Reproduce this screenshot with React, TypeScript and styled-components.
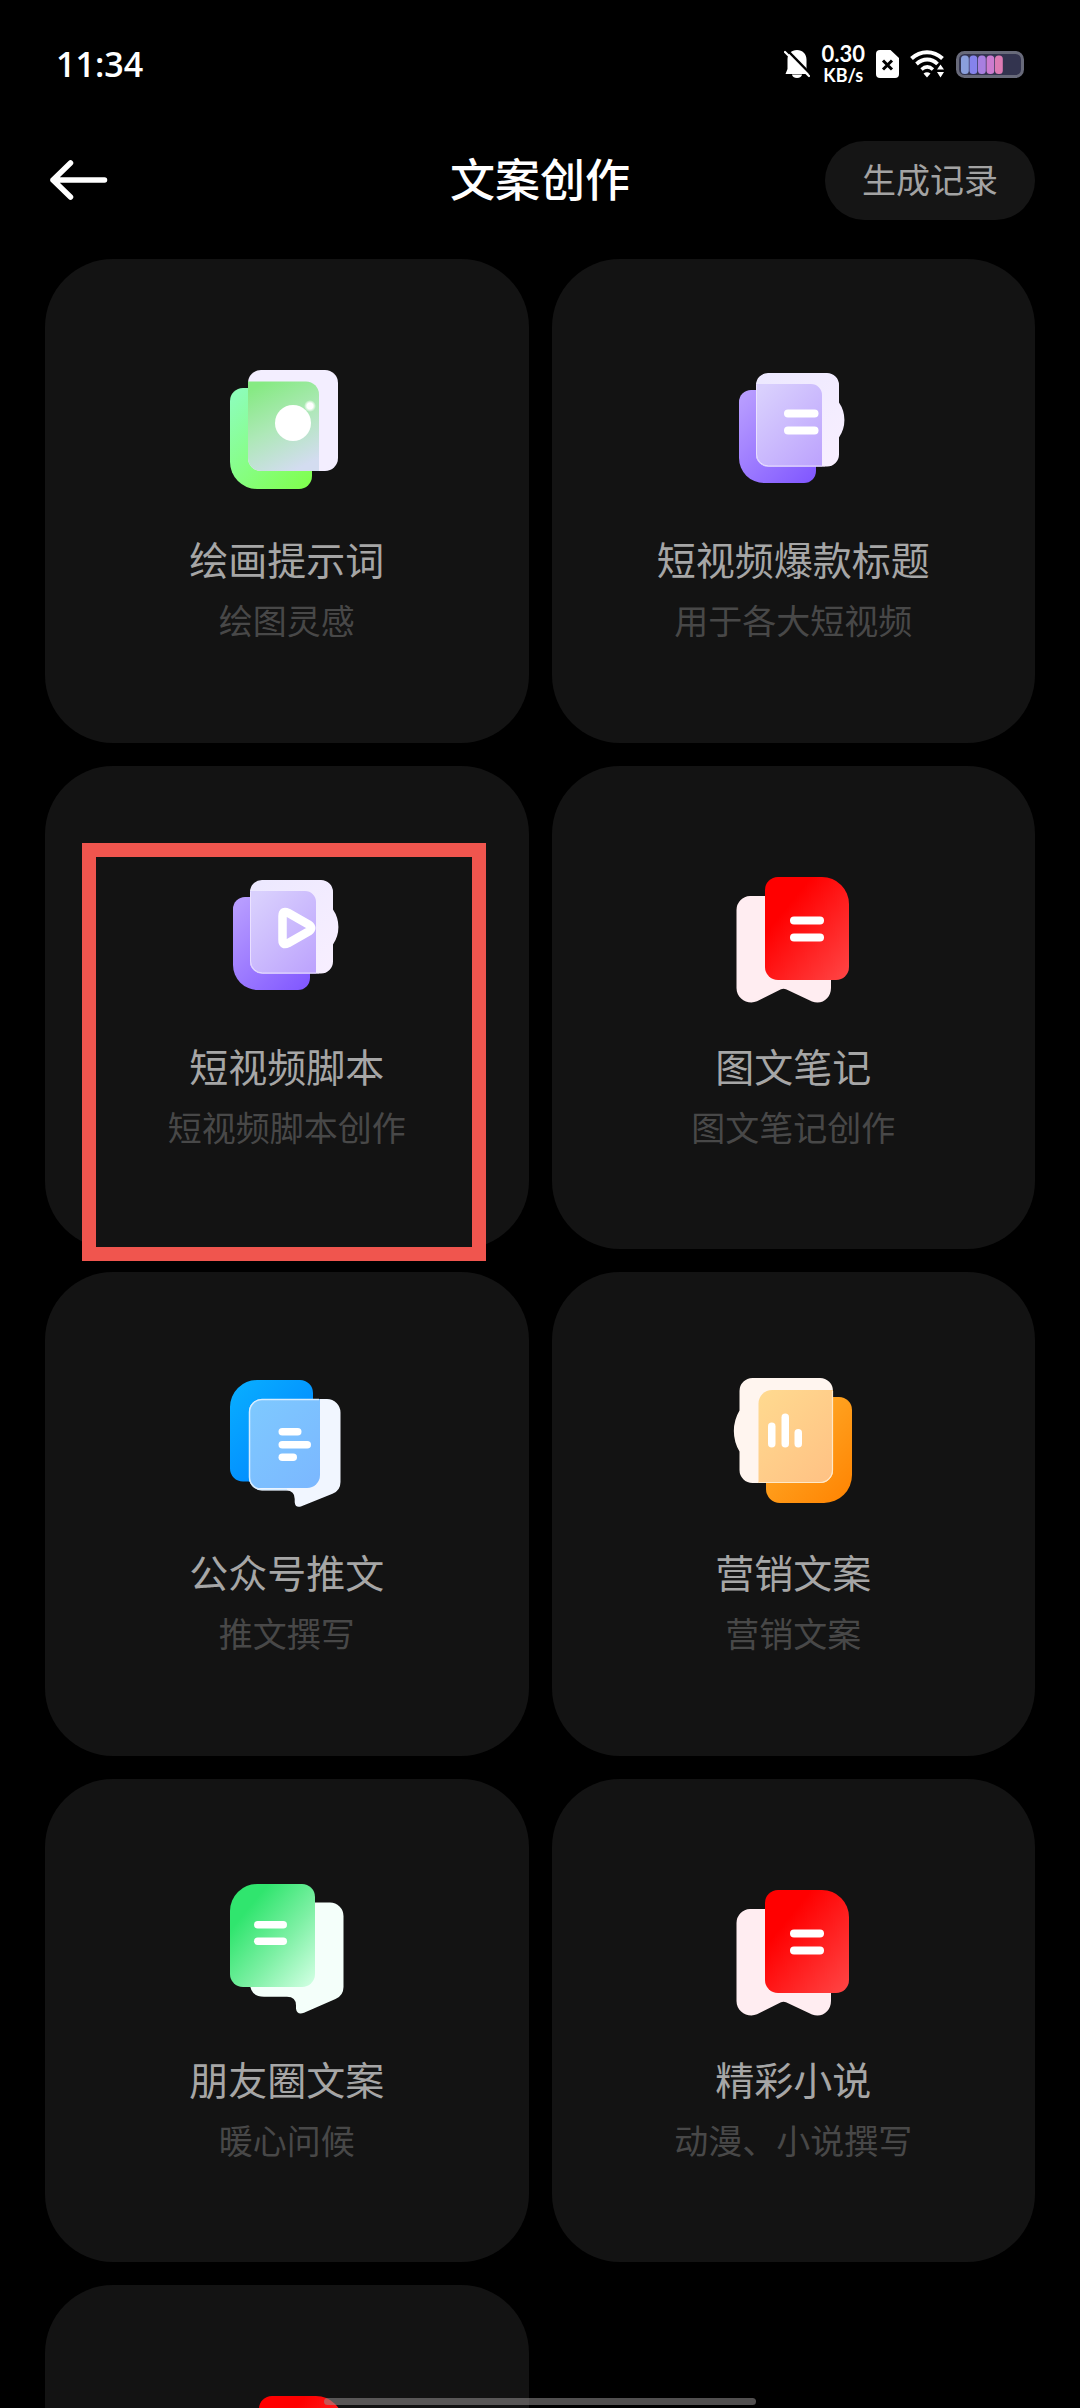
import React from 'react';
import styled, { createGlobalStyle } from 'styled-components';

const GlobalStyle = createGlobalStyle`
  *, *::before, *::after { box-sizing: border-box; }
  html, body { margin: 0; background: #000; }
  body { font-family: "Noto Sans CJK SC", "Noto Sans", sans-serif; color: #fff; }
  button { border: 0; padding: 0; background: none; color: inherit; font: inherit; cursor: pointer; }
  svg { display: block; }
`;

const Screen = styled.div`
  height: 100vh;
  display: flex;
  flex-direction: column;
  overflow: hidden;
  background: #000;
`;

const StatusBar = styled.div`
  flex: none;
  height: 128px;
  padding: 0 56px;
  display: flex;
  align-items: center;
  justify-content: space-between;
  font-family: "Open Sans", "Noto Sans", sans-serif;
`;

const Clock = styled.time`
  font-size: 34px;
  line-height: 40px;
  font-weight: 600;
`;

const StatusIcons = styled.div`
  display: flex;
  align-items: center;
  gap: 11px;
`;

const NetSpeed = styled.div`
  display: flex;
  flex-direction: column;
  align-items: center;
  font-family: Lato, "Noto Sans", sans-serif;
  font-weight: 700;
`;

const SpeedValue = styled.span`
  font-size: 22px;
  line-height: 22px;
`;

const SpeedUnit = styled.span`
  font-size: 18px;
  line-height: 20px;
`;

const Header = styled.header`
  flex: none;
  height: 104px;
  padding: 0 45px;
  display: grid;
  grid-template-columns: 1fr auto 1fr;
  align-items: center;
`;

const BackButton = styled.button`
  justify-self: start;
  display: flex;
`;

const Title = styled.h1`
  margin: 0;
  padding-bottom: 4px;
  font-size: 45px;
  line-height: 60px;
  font-weight: 500;
`;

const HistoryButton = styled.button`
  && {
    justify-self: end;
    height: 79px;
    padding: 0 37px 3px;
    border-radius: 40px;
    background: #151515;
    color: #a3a3a3;
    font-size: 34px;
    line-height: 48px;
  }
`;

const Scroller = styled.main`
  flex: 1;
  min-height: 0;
  overflow-y: auto;
  scrollbar-width: none;
  padding: 27px 45px;
`;

const CardGrid = styled.div`
  display: grid;
  grid-template-columns: 1fr 1fr;
  gap: 23px;
`;

const Card = styled.button`
  && {
    position: relative;
    aspect-ratio: 1;
    padding-top: 97px;
    display: flex;
    flex-direction: column;
    align-items: center;
    justify-content: flex-start;
    border-radius: 68px;
    background: #131313;
  }
`;

const CardName = styled.span`
  margin-top: 32px;
  font-size: 39px;
  line-height: 52px;
  color: #a6a6a6;
`;

const CardHint = styled.span`
  margin-top: 12px;
  font-size: 34px;
  line-height: 48px;
  color: #484848;
`;

const Highlight = styled.span`
  position: absolute;
  inset: 77px 43px -12px 37px;
  border: 14px solid #f0554e;
  pointer-events: none;
`;

const HomeIndicator = styled.div`
  position: fixed;
  left: 30%;
  right: 30%;
  bottom: 3px;
  height: 7px;
  border-radius: 4px;
  background: rgba(150, 146, 146, 0.54);
`;

type Stop = [string, string];

function Gradient({ id, from, to }: { id: string; from: string; to: string }) {
  const stops: Stop[] = [['0', from], ['1', to]];
  return (
    <linearGradient id={id} x1="0.1" y1="0.05" x2="0.9" y2="1">
      {stops.map(([offset, color]) => (
        <stop key={offset} offset={offset} stopColor={color} />
      ))}
    </linearGradient>
  );
}

function Art({ children }: { children: React.ReactNode }) {
  return (
    <svg width="144" height="144" viewBox="0 0 144 144" aria-hidden="true">
      {children}
    </svg>
  );
}

function PaintIcon() {
  return (
    <Art>
      <defs>
        <Gradient id="paint-back" from="#8dfdb8" to="#80ff50" />
        <linearGradient id="paint-mix" x1="0.25" y1="0" x2="0.65" y2="1">
          <stop offset="0" stopColor="#86ea83" />
          <stop offset="0.5" stopColor="#aee8b8" />
          <stop offset="1" stopColor="#d3dcf0" />
        </linearGradient>
        <radialGradient id="paint-dot">
          <stop offset="0.5" stopColor="#fff" />
          <stop offset="1" stopColor="#fff" stopOpacity="0" />
        </radialGradient>
      </defs>
      <path d="M28 32H84a13 13 0 0 1 13 13V120a13 13 0 0 1-13 13H42a27 27 0 0 1-27-27V45a13 13 0 0 1 13-13Z" fill="url(#paint-back)" />
      <rect x="33" y="14" width="90" height="101" rx="13" fill="#f3eeff" />
      <path d="M33 25.500H91a13 13 0 0 1 13 13V115H46a13 13 0 0 1-13-13Z" fill="url(#paint-mix)" />
      <circle cx="78" cy="67" r="18" fill="#fff" />
      <circle cx="95" cy="50" r="6" fill="url(#paint-dot)" />
    </Art>
  );
}

function VideoSheet({ id, children }: { id: string; children: React.ReactNode }) {
  return (
    <Art>
      <defs>
        <Gradient id={`${id}-back`} from="#b79cff" to="#8259ff" />
        <Gradient id={`${id}-mix`} from="#d9d0fd" to="#bda4fd" />
        <Gradient id={`${id}-front`} from="#ede9ff" to="#f8efff" />
      </defs>
      <path d="M30 34H83a12 12 0 0 1 12 12V115a12 12 0 0 1-12 12H43a25 25 0 0 1-25-25V46a12 12 0 0 1 12-12Z" fill={`url(#${id}-back)`} />
      <path d="M47 17H106a12 12 0 0 1 12 12V46.500a31 31 0 0 1 0 35V98.500a12 12 0 0 1-12 12H47a12 12 0 0 1-12-12V29a12 12 0 0 1 12-12Z" fill={`url(#${id}-front)`} />
      <path d="M35 28H90a11 11 0 0 1 11 11V110.500H47a12 12 0 0 1-12-12Z" fill={`url(#${id}-mix)`} />
      <path d="M35.500 29V98a12 12 0 0 0 12 12H104" fill="none" stroke="#efe6ff" strokeWidth="1" opacity="0.8" />
      {children}
    </Art>
  );
}

function VideoTitleIcon() {
  return (
    <VideoSheet id="vtitle">
      <rect x="63" y="53.500" width="34.500" height="8" rx="4" fill="#fff" />
      <rect x="63" y="70.500" width="34.500" height="8" rx="4" fill="#fff" />
    </VideoSheet>
  );
}

function VideoScriptIcon() {
  return (
    <VideoSheet id="vscript">
      <path d="M67.500 53q0-6 5.500-3.200L94 61.700q4.500 3.300 0 6.600L73 80.200q-5.500 2.800-5.500-3.200Z" fill="none" stroke="#fff" strokeWidth="8.500" strokeLinejoin="round" />
    </VideoSheet>
  );
}

function BookmarkIcon({ id }: { id: string }) {
  return (
    <Art>
      <defs>
        <linearGradient id={id} x1="0.25" y1="0.3" x2="0.95" y2="1">
          <stop offset="0" stopColor="#ff0000" />
          <stop offset="1" stopColor="#ff4444" />
        </linearGradient>
      </defs>
      <path d="M29 33H96a14 14 0 0 1 14 14V125c0 10-9 17.500-19 13.500L65 126.200q-2.500-1-5 0L36 138.300C27 142 15.500 136 15.500 125V47A14 14 0 0 1 29 33Z" fill="#ffedf1" />
      <path d="M57 14H101a27 27 0 0 1 27 27V104a13 13 0 0 1-13 13H57a13 13 0 0 1-13-13V27a13 13 0 0 1 13-13Z" fill={`url(#${id})`} />
      <rect x="69" y="53.500" width="34" height="8" rx="4" fill="#fff" />
      <rect x="69" y="70.500" width="34" height="8" rx="4" fill="#fff" />
    </Art>
  );
}

function ArticleIcon() {
  return (
    <Art>
      <defs>
        <Gradient id="article-back" from="#08acff" to="#0080ff" />
        <Gradient id="article-mix" from="#7ec8ff" to="#7bb8ff" />
      </defs>
      <path d="M42 11H85a13 13 0 0 1 13 13V112.500H28a13 13 0 0 1-13-13V38A27 27 0 0 1 42 11Z" fill="url(#article-back)" />
      <path d="M47 30H112a13.500 13.500 0 0 1 13.500 13.500V113q0 8.500-8 11.800L86.500 137.200q-6.300 2-6.800-4V130q0-8.500-8.500-8.500H47a13 13 0 0 1-13-13V43a13 13 0 0 1 13-13Z" fill="#f1f6ff" />
      <path d="M47 30H105V106a13 13 0 0 1-13 13H40q-6-4-6-12V43a13 13 0 0 1 13-13Z" fill="url(#article-mix)" />
      <path d="M104 30.500H47a12.500 12.500 0 0 0-12.500 12.500V108a12.500 12.500 0 0 0 12.500 12.500H72" fill="none" stroke="#d6ecff" strokeWidth="1.500" />
      <rect x="63.500" y="59" width="23" height="7.500" rx="3.750" fill="#fff" />
      <rect x="63.500" y="72" width="32.500" height="7.500" rx="3.750" fill="#fff" />
      <rect x="63.500" y="84.500" width="18.500" height="7.500" rx="3.750" fill="#fff" />
    </Art>
  );
}

function MarketingIcon() {
  return (
    <Art>
      <defs>
        <Gradient id="market-back" from="#ffb02e" to="#ff8503" />
        <Gradient id="market-mix" from="#ffd88f" to="#ffc284" />
      </defs>
      <path d="M58 28H118a13 13 0 0 1 13 13V106a28 28 0 0 1-28 28H59a14 14 0 0 1-14-14V41a13 13 0 0 1 13-13Z" fill="url(#market-back)" />
      <path d="M31.500 9H99a13 13 0 0 1 13 13V101a13 13 0 0 1-13 13H31.500a13 13 0 0 1-13-13V82.500a40 40 0 0 1 0-41V22a13 13 0 0 1 13-13Z" fill="#fff5ef" />
      <path d="M51 21H112V101a13 13 0 0 1-13 13H37.500V34.500A13.500 13.500 0 0 1 51 21Z" fill="url(#market-mix)" />
      <path d="M111.500 22V101a12.500 12.500 0 0 1-12.500 12.500H38" fill="none" stroke="#ffe9c8" strokeWidth="1.200" />
      <rect x="47" y="53.500" width="7.500" height="25" rx="3.750" fill="#fff" />
      <rect x="60.500" y="44.500" width="7.500" height="34" rx="3.750" fill="#fff" />
      <rect x="73.500" y="60" width="7.500" height="18.500" rx="3.750" fill="#fff" />
    </Art>
  );
}

function MomentsIcon() {
  return (
    <Art>
      <defs>
        <linearGradient id="moments" x1="0.2" y1="0.25" x2="0.95" y2="1">
          <stop offset="0" stopColor="#30e56e" />
          <stop offset="0.5" stopColor="#7df0a4" />
          <stop offset="1" stopColor="#d0ffe2" />
        </linearGradient>
      </defs>
      <path d="M48 26.500H115a13.500 13.500 0 0 1 13.500 13.500V111q0 8.500-8 12L89 136.800q-7 2.500-8-4V129.500q0-8.800-9-8.800H49q-14 0-14-14V40Z" fill="#f4fffa" />
      <path d="M42 8H87a13 13 0 0 1 13 13V98a13 13 0 0 1-13 13H28a13 13 0 0 1-13-13V35A27 27 0 0 1 42 8Z" fill="url(#moments)" />
      <rect x="39" y="45" width="33" height="7.500" rx="3.750" fill="#fff" />
      <rect x="39" y="61.500" width="33" height="7.500" rx="3.750" fill="#fff" />
    </Art>
  );
}

function BackArrow() {
  return (
    <svg width="64" height="44" viewBox="0 0 64 44" fill="none" stroke="#fff" strokeWidth="5.500" strokeLinecap="round" strokeLinejoin="round" aria-hidden="true">
      <path d="M8 22H59.500M25.500 5 8 22 25.500 39" />
    </svg>
  );
}

function MutedBell() {
  return (
    <svg width="26" height="28" viewBox="0 0 26 28" aria-hidden="true">
      <path d="M13 0C18.500 0 22.500 4 22.500 9.500V18L25 24H1.500L3.500 19V9.500C3.500 4 7.500 0 13 0Z" fill="#fff" />
      <path d="M8 24.500a5 3.500 0 0 0 10 0Z" fill="#fff" />
      <path d="M3 0 26 23.500" stroke="#000" strokeWidth="2.500" />
      <path d="M1 2 25 26" stroke="#fff" strokeWidth="2.200" strokeLinecap="round" />
    </svg>
  );
}

function NoSim() {
  return (
    <svg width="23" height="28" viewBox="0 0 23 28" aria-hidden="true">
      <path d="M4 0H14.500L23 8V24a4 4 0 0 1-4 4H4a4 4 0 0 1-4-4V4a4 4 0 0 1 4-4Z" fill="#fff" />
      <path d="M7 10.500 16 19.500M16 10.500 7 19.500" stroke="#000" strokeWidth="3" />
    </svg>
  );
}

function Wifi() {
  return (
    <svg width="35" height="28" viewBox="0 0 35 28" fill="none" aria-hidden="true">
      <path d="M1.500 8.500C10.500 0 23.500 0 32.500 8.500" stroke="#fff" strokeWidth="4" />
      <path d="M6.500 14C13 8 21.500 8 27.500 14" stroke="#fff" strokeWidth="3.800" />
      <path d="M11.500 19.500C15.500 16 19 16 23 19.500" stroke="#fff" strokeWidth="3.600" />
      <path d="M13.500 23.500Q17 21 20.500 23.500L17 27.500Z" fill="#fff" />
      <path d="M30.500 14.500 34 19.500H27ZM30.500 27.500 34 22H27Z" fill="#fff" />
    </svg>
  );
}

const CELLS = ['#8a9fdc', '#8583ec', '#a87fe0', '#cc7cd0', '#dd7bb4'];

function Battery() {
  return (
    <svg width="68" height="27" viewBox="0 0 68 27" aria-hidden="true">
      <rect x="1.500" y="1.500" width="65" height="24" rx="7" fill="#33344f" stroke="#686a7a" strokeWidth="3" />
      {CELLS.map((color, i) => (
        <rect key={color} x={5 + i * 8.5} y="4.500" width="7.800" height="18.500" rx="3.500" fill={color} />
      ))}
    </svg>
  );
}

interface Tool {
  name?: string;
  hint?: string;
  icon: React.ReactNode;
  selected?: boolean;
}

const TOOLS: Tool[] = [
  { name: '绘画提示词', hint: '绘图灵感', icon: <PaintIcon /> },
  { name: '短视频爆款标题', hint: '用于各大短视频', icon: <VideoTitleIcon /> },
  { name: '短视频脚本', hint: '短视频脚本创作', icon: <VideoScriptIcon />, selected: true },
  { name: '图文笔记', hint: '图文笔记创作', icon: <BookmarkIcon id="note" /> },
  { name: '公众号推文', hint: '推文撰写', icon: <ArticleIcon /> },
  { name: '营销文案', hint: '营销文案', icon: <MarketingIcon /> },
  { name: '朋友圈文案', hint: '暖心问候', icon: <MomentsIcon /> },
  { name: '精彩小说', hint: '动漫、小说撰写', icon: <BookmarkIcon id="novel" /> },
  { icon: <BookmarkIcon id="more" /> },
];

export default function App() {
  return (
    <Screen>
      <GlobalStyle />
      <StatusBar>
        <Clock>11:34</Clock>
        <StatusIcons>
          <MutedBell />
          <NetSpeed>
            <SpeedValue>0.30</SpeedValue>
            <SpeedUnit>KB/s</SpeedUnit>
          </NetSpeed>
          <NoSim />
          <Wifi />
          <Battery />
        </StatusIcons>
      </StatusBar>
      <Header>
        <BackButton type="button" aria-label="返回">
          <BackArrow />
        </BackButton>
        <Title>文案创作</Title>
        <HistoryButton type="button">生成记录</HistoryButton>
      </Header>
      <Scroller>
        <CardGrid>
          {TOOLS.map((tool, i) => (
            <Card key={i} type="button" aria-label={tool.name ?? '更多'}>
              {tool.icon}
              {tool.name && <CardName>{tool.name}</CardName>}
              {tool.hint && <CardHint>{tool.hint}</CardHint>}
              {tool.selected && <Highlight />}
            </Card>
          ))}
        </CardGrid>
      </Scroller>
      <HomeIndicator />
    </Screen>
  );
}
